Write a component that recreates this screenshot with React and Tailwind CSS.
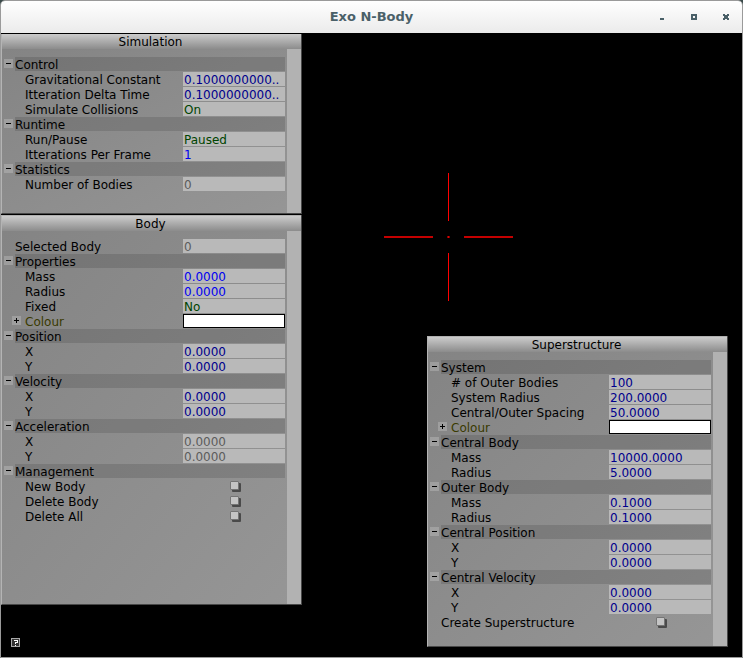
import { useState } from "react";

const simulation = [
  {
    title: "Control",
    rows: [
      { label: "Gravitational Constant", value: "0.1000000000..", tone: "navy" },
      { label: "Itteration Delta Time", value: "0.1000000000..", tone: "navy" },
      { label: "Simulate Collisions", value: "On", kind: "toggle" },
    ],
  },
  {
    title: "Runtime",
    rows: [
      { label: "Run/Pause", value: "Paused", kind: "toggle" },
      { label: "Itterations Per Frame", value: "1", tone: "blue" },
    ],
  },
  {
    title: "Statistics",
    rows: [{ label: "Number of Bodies", value: "0", tone: "gray" }],
  },
];

const body = [
  { rows: [{ label: "Selected Body", value: "0", tone: "gray" }] },
  {
    title: "Properties",
    rows: [
      { label: "Mass", value: "0.0000", tone: "blue" },
      { label: "Radius", value: "0.0000", tone: "blue" },
      { label: "Fixed", value: "No", kind: "toggle" },
      { label: "Colour", kind: "colour" },
    ],
  },
  {
    title: "Position",
    rows: [
      { label: "X", value: "0.0000", tone: "navy" },
      { label: "Y", value: "0.0000", tone: "navy" },
    ],
  },
  {
    title: "Velocity",
    rows: [
      { label: "X", value: "0.0000", tone: "navy" },
      { label: "Y", value: "0.0000", tone: "navy" },
    ],
  },
  {
    title: "Acceleration",
    rows: [
      { label: "X", value: "0.0000", tone: "gray" },
      { label: "Y", value: "0.0000", tone: "gray" },
    ],
  },
  {
    title: "Management",
    rows: [
      { label: "New Body", kind: "action" },
      { label: "Delete Body", kind: "action" },
      { label: "Delete All", kind: "action" },
    ],
  },
];

const superstructure = [
  {
    title: "System",
    rows: [
      { label: "# of Outer Bodies", value: "100", tone: "navy" },
      { label: "System Radius", value: "200.0000", tone: "navy" },
      { label: "Central/Outer Spacing", value: "50.0000", tone: "navy" },
      { label: "Colour", kind: "colour" },
    ],
  },
  {
    title: "Central Body",
    rows: [
      { label: "Mass", value: "10000.0000", tone: "navy" },
      { label: "Radius", value: "5.0000", tone: "navy" },
    ],
  },
  {
    title: "Outer Body",
    rows: [
      { label: "Mass", value: "0.1000", tone: "navy" },
      { label: "Radius", value: "0.1000", tone: "navy" },
    ],
  },
  {
    title: "Central Position",
    rows: [
      { label: "X", value: "0.0000", tone: "navy" },
      { label: "Y", value: "0.0000", tone: "navy" },
    ],
  },
  {
    title: "Central Velocity",
    rows: [
      { label: "X", value: "0.0000", tone: "navy" },
      { label: "Y", value: "0.0000", tone: "navy" },
    ],
  },
  { rows: [{ label: "Create Superstructure", kind: "action" }] },
];

const tones = {
  navy: "text-[#00008c]",
  blue: "text-[#0000f0]",
  gray: "text-[#5c5c5c]",
};

function Sign({ open }) {
  return (
    <svg width="9" height="9" viewBox="0 0 9 9" shapeRendering="crispEdges" className="mt-[2px] shrink-0 bg-white/20" aria-hidden="true">
      <path d={open ? "M2 4h5v1H2z" : "M2 4h5v1H2z M4 2h1v5H4z"} fill="#000" />
    </svg>
  );
}

function Row({ row, id, grouped }) {
  const { label, value, kind, tone } = row;
  const indent = grouped ? "pl-[21px]" : "pl-[11px]";
  return (
    <div className="flex h-[15px]">
      {kind === "colour" ? (
        <button type="button" className="flex min-w-0 flex-1 items-start gap-1 pl-2 text-left text-[#3a3a00]">
          <Sign open={false} />
          {label}
        </button>
      ) : (
        <label htmlFor={id} className={`min-w-0 flex-1 ${indent}`}>
          {label}
        </label>
      )}
      <div className="flex h-[14px] w-[102px] shrink-0">
        {kind === "colour" && (
          <button id={id} type="button" aria-label={`${label} swatch`} className="w-full border border-black bg-white" />
        )}
        {kind === "toggle" && (
          <button id={id} type="button" className="flex w-full items-start bg-[#b9b9b9] pl-px text-left text-[#004400]">
            {value}
          </button>
        )}
        {kind === "action" && (
          <button
            id={id}
            type="button"
            aria-label={label}
            className="mt-[2px] ml-[47px] size-[9px] rounded-[1px] border border-[#747474] bg-[#c4c4c4] shadow-[2px_2px_0_#4a4a4a]"
          />
        )}
        {!kind && (
          <input
            id={id}
            type="text"
            defaultValue={value}
            readOnly={tone === "gray"}
            className={`w-full min-w-0 bg-[#b9b9b9] pt-[2px] pl-px leading-3 outline-none ${tones[tone]}`}
          />
        )}
      </div>
    </div>
  );
}

function Group({ group, id }) {
  const [open, setOpen] = useState(true);
  return (
    <section>
      {group.title && (
        <button
          type="button"
          aria-expanded={open}
          onClick={() => setOpen(!open)}
          className="flex h-[15px] w-full items-start gap-[2px] text-left"
        >
          <Sign open={open} />
          <span className="h-[14px] flex-1 bg-black/12">{group.title}</span>
        </button>
      )}
      {open &&
        group.rows.map((row) => (
          <Row key={row.label} row={row} id={`${id}-${row.label}`} grouped={Boolean(group.title)} />
        ))}
    </section>
  );
}

function Panel({ title, groups, className }) {
  return (
    <section
      className={`flex w-[301px] flex-col border-r border-b border-l border-r-[#484848] border-b-[#484848] border-l-[#b4b4b4] ${className}`}
    >
      <h2 className="h-4 border-t border-[#b0b0b0] bg-linear-to-b from-[#cccccc] to-[#8c8c8c] pr-[2px] text-center leading-4">
        {title}
      </h2>
      <div className="flex flex-1 bg-linear-to-br from-[#848484] to-[#969696]">
        <div className="flex-1 px-[2px] pt-2">
          {groups.map((group, i) => (
            <Group key={i} group={group} id={`${title}-${i}`} />
          ))}
        </div>
        <div className="w-[14px] bg-[#b2b2b2]" />
      </div>
    </section>
  );
}

function TitleBar() {
  return (
    <header className="relative z-10 flex h-8 items-center justify-end bg-linear-to-b from-white to-[#ebebeb] pr-[11px] shadow-[0_1px_0_#000]">
      <h1 className="absolute inset-x-0 text-center text-[13px] leading-8 font-bold text-[#4a6068]">Exo N-Body</h1>
      <div className="relative flex gap-[23px] text-[#4a6068]">
        <button type="button" aria-label="Minimize">
          <svg width="9" height="9" viewBox="0 0 9 9" shapeRendering="crispEdges" fill="currentColor">
            <path d="M2 5h4v2H2z" />
          </svg>
        </button>
        <button type="button" aria-label="Maximize">
          <svg width="9" height="9" viewBox="0 0 9 9" shapeRendering="crispEdges" fill="currentColor">
            <path fillRule="evenodd" d="M1 1h6v6H1z M3 3v2h2V3z" />
          </svg>
        </button>
        <button type="button" aria-label="Close">
          <svg width="9" height="9" viewBox="0 0 9 9" shapeRendering="crispEdges" fill="currentColor">
            <path d="M1 1h2v1h2V1h2v2H6v2h1v2H5V6H3v1H1V5h1V3H1z" />
          </svg>
        </button>
      </div>
    </header>
  );
}

function Crosshair() {
  return (
    <svg
      width="129"
      height="128"
      viewBox="0 0 129 128"
      shapeRendering="crispEdges"
      className="absolute top-[140px] left-[383px]"
      aria-label="Crosshair"
    >
      <path d="M64 0h1v48h-1z M64 80h1v48h-1z" fill="#ff0000" />
      <path d="M0 63h49v2H0z M80 63h49v2H80z" fill="#c40000" />
      <path d="M63 63h3v2h-3z" fill="#800000" />
      <path d="M64 63h1v2h-1z" fill="#e00000" />
    </svg>
  );
}

export default function App() {
  return (
    <div className="h-screen bg-[#3a4a4a] font-['DejaVu_Sans',sans-serif] text-[12px] leading-4 text-black">
      <div className="flex h-full flex-col overflow-hidden rounded-t-[5px] border border-[#9a9a9a]">
        <TitleBar />
        <main className="relative flex-1 bg-black">
          <div className="flex w-[301px] flex-col gap-px">
            <Panel title="Simulation" groups={simulation} className="h-[181px]" />
            <Panel title="Body" groups={body} className="h-[390px]" />
          </div>
          <Crosshair />
          <Panel title="Superstructure" groups={superstructure} className="absolute right-[14px] bottom-[10px] h-[311px]" />
          <button type="button" aria-label="Help" className="absolute bottom-[10px] left-[10px]">
            <svg width="9" height="9" viewBox="0 0 9 9" shapeRendering="crispEdges" className="block">
              <path d="M0 0h9v9H0z" fill="#a8a8a8" />
              <path d="M1 1h7v7H1z" fill="#333" />
              <path d="M3 2h4v3H5v1H4V4h2V3H3z M4 7h1v1H4z" fill="#fff" />
            </svg>
          </button>
        </main>
      </div>
    </div>
  );
}
